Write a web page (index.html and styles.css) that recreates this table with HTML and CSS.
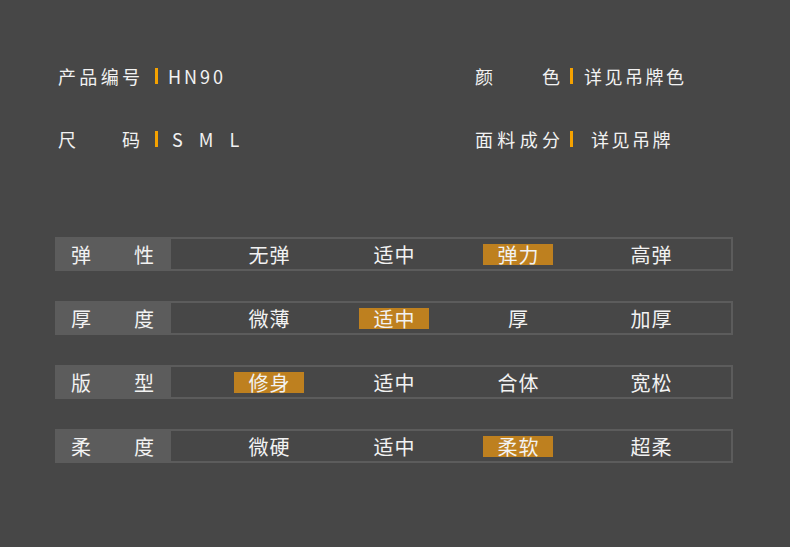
FILE: index.html
```html
<!DOCTYPE html>
<html lang="zh">
<head>
<meta charset="utf-8">
<title>尺码信息</title>
<link rel="stylesheet" href="styles.css">
</head>
<body>
<div class="page">
  <div class="info">
    <div class="info-item">
      <span class="key"><span>产</span><span>品</span><span>编</span><span>号</span></span>
      <span class="bar"></span>
      <span class="val">HN90</span>
    </div>
    <div class="info-item right">
      <span class="key"><span>颜</span><span>色</span></span>
      <span class="bar"></span>
      <span class="val">详见吊牌色</span>
    </div>
    <div class="info-item">
      <span class="key"><span>尺</span><span>码</span></span>
      <span class="bar"></span>
      <span class="val sml">S M L</span>
    </div>
    <div class="info-item right">
      <span class="key"><span>面</span><span>料</span><span>成</span><span>分</span></span>
      <span class="bar"></span>
      <span class="val indent">详见吊牌</span>
    </div>
  </div>

  <div class="table">
    <div class="row">
      <div class="label"><span>弹</span><span>性</span></div>
      <div class="opts">
        <span class="opt">无弹</span>
        <span class="opt">适中</span>
        <span class="opt on">弹力</span>
        <span class="opt">高弹</span>
      </div>
    </div>
    <div class="row">
      <div class="label"><span>厚</span><span>度</span></div>
      <div class="opts">
        <span class="opt">微薄</span>
        <span class="opt on">适中</span>
        <span class="opt">厚</span>
        <span class="opt">加厚</span>
      </div>
    </div>
    <div class="row">
      <div class="label"><span>版</span><span>型</span></div>
      <div class="opts">
        <span class="opt on">修身</span>
        <span class="opt">适中</span>
        <span class="opt">合体</span>
        <span class="opt">宽松</span>
      </div>
    </div>
    <div class="row">
      <div class="label"><span>柔</span><span>度</span></div>
      <div class="opts">
        <span class="opt">微硬</span>
        <span class="opt">适中</span>
        <span class="opt on">柔软</span>
        <span class="opt">超柔</span>
      </div>
    </div>
  </div>
</div>
</body>
</html>
```

FILE: styles.css
```css
html, body {
  margin: 0;
  padding: 0;
  background: #474747;
}

.page {
  width: 790px;
  height: 547px;
  box-sizing: border-box;
  padding: 61px 0 0 0;
  font-family: "Noto Sans CJK SC", "Noto Sans", sans-serif;
  color: #f2f2f2;
}

.info {
  display: grid;
  grid-template-columns: 417px 1fr;
  row-gap: 33px;
  padding-left: 58px;
}

.info-item {
  display: flex;
  align-items: center;
  height: 30px;
  font-size: 18px;
  line-height: 30px;
}

.key {
  display: flex;
  justify-content: space-between;
  width: 82px;
}

.right .key {
  width: 85px;
}

.bar {
  width: 3px;
  height: 16px;
  background: #f5a200;
  margin-left: 15px;
  margin-right: 10px;
}

.right .bar {
  margin-left: 10px;
  margin-right: 11px;
}

.val {
  letter-spacing: 3px;
}

.val.sml {
  letter-spacing: 6px;
  padding-left: 4px;
}

.val.indent {
  padding-left: 7px;
  letter-spacing: 2.5px;
}

.right .val {
  letter-spacing: 2.5px;
}

.table {
  margin-top: 83px;
  margin-left: 55px;
  width: 678px;
  display: flex;
  flex-direction: column;
  gap: 30px;
}

.row {
  display: flex;
  height: 34px;
  box-sizing: border-box;
  border: 2px solid #5c5c5c;
  border-left: none;
}

.label {
  width: 116px;
  background: #5c5c5c;
  margin-top: -2px;
  margin-bottom: -2px;
  display: flex;
  justify-content: space-between;
  align-items: center;
  padding: 0 17px 0 16px;
  box-sizing: border-box;
  font-size: 20px;
}

.opts {
  display: grid;
  grid-template-columns: 125px 124px 133px 70px;
  padding-left: 63px;
  align-items: center;
}

.opt {
  width: 70px;
  height: 21px;
  line-height: 21px;
  text-align: center;
  font-size: 20px;
  letter-spacing: 1px;
  text-indent: 1px;
}

.opt.on {
  background: #be801f;
}
```
